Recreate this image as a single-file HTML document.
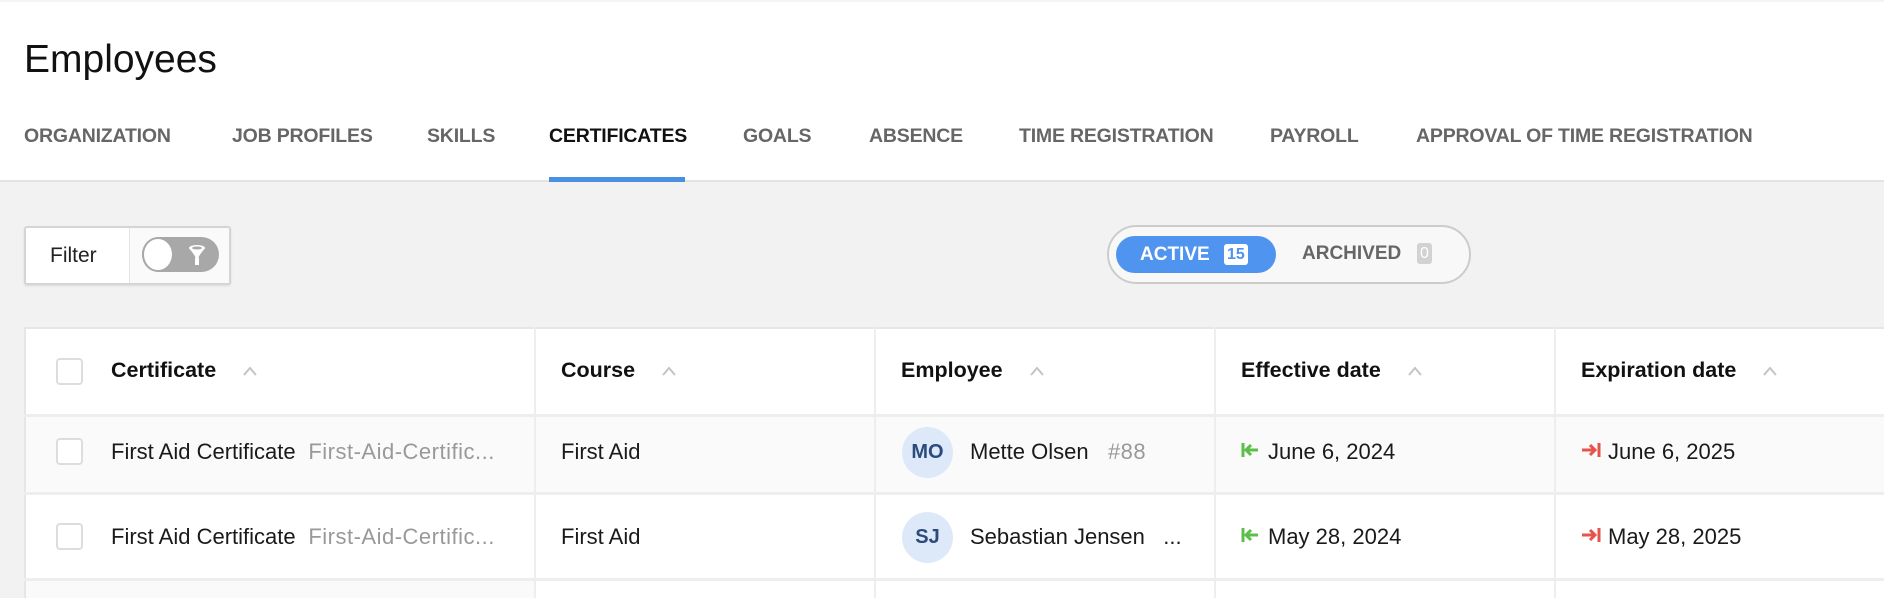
<!DOCTYPE html>
<html><head><meta charset="utf-8"><style>
*{box-sizing:border-box;margin:0;padding:0}
body{width:1884px;height:598px;overflow:hidden;background:#f2f2f2;font-family:"Liberation Sans",Arial,sans-serif;color:#1a1a1a;position:relative}
.abs{position:absolute}
.head{left:0;top:0;width:1884px;height:182px;background:#fff;border-top:2px solid #f4f4f4;border-bottom:2px solid #e3e3e3}
.title{left:24px;top:38px;font-size:39px;color:#111}
.tab{top:125px;font-size:19.5px;font-weight:bold;color:#666;letter-spacing:-0.2px}
.tab.on{color:#111}
.ul{left:549px;top:177px;width:136px;height:5px;background:#4a90e2}
.filter{left:24px;top:226px;width:207px;height:59px;background:#fff;border:2px solid #d5d5d5;border-radius:3px;box-shadow:0 1px 2px rgba(0,0,0,.1)}
.filter .lbl{position:absolute;left:24px;top:16px;font-size:21px;color:#222}
.filter .side{position:absolute;left:103px;top:0;width:100px;height:55px;background:#fafafa;border-left:1px solid #e5e5e5}
.tog{position:absolute;left:12px;top:9px;width:77px;height:35px;border-radius:18px;background:#a8a8a8}
.knob{position:absolute;left:0;top:0;width:32px;height:35px;border-radius:50%;background:#fff;border:2px solid #a8a8a8}
.pill{left:1107px;top:225px;width:364px;height:59px;border:2px solid #ccc;border-radius:30px;background:#f8f8f8}
.act{left:1116px;top:236px;width:160px;height:37px;background:#4f94ef;border-radius:19px;color:#fff;font-weight:bold;font-size:19px}
.badge{display:inline-block;font-size:16px;padding:1px 3px;border-radius:3px;line-height:19px}
.table{left:24px;top:327px;width:1860px;height:271px;background:#fff;border-top:2px solid #e6e6e6;border-left:2px solid #e6e6e6}
.vl{top:327px;width:2px;height:271px;background:#eee}
.hl{left:24px;width:1860px;height:3px;background:#eee}
.cb{width:27px;height:27px;border:2px solid #ddd;border-radius:4px;background:#fff}
.th{font-size:21.5px;font-weight:bold;color:#111;white-space:nowrap}
.car{display:inline-block;margin-left:26px;vertical-align:middle}
.td{font-size:22px;color:#1a1a1a;white-space:nowrap}
.g{color:#999;letter-spacing:0.5px}
.av{width:51px;height:51px;border-radius:50%;background:#dde9f9;color:#2b4a7d;font-weight:bold;font-size:20px;text-align:center;line-height:51px}
</style></head><body>
<div class="abs head"></div>
<div class="abs title">Employees</div>
<div class="abs tab" style="left:24px">ORGANIZATION</div>
<div class="abs tab" style="left:232px">JOB PROFILES</div>
<div class="abs tab" style="left:427px">SKILLS</div>
<div class="abs tab on" style="left:549px">CERTIFICATES</div>
<div class="abs tab" style="left:743px">GOALS</div>
<div class="abs tab" style="left:869px">ABSENCE</div>
<div class="abs tab" style="left:1019px">TIME REGISTRATION</div>
<div class="abs tab" style="left:1270px">PAYROLL</div>
<div class="abs tab" style="left:1416px">APPROVAL OF TIME REGISTRATION</div>
<div class="abs ul"></div>

<div class="abs filter"><div class="lbl">Filter</div><div class="side"><div class="tog"><div class="knob"></div>
<svg style="position:absolute;left:44px;top:6px" width="22" height="24" viewBox="0 0 22 24"><ellipse cx="11" cy="5" rx="8" ry="3" fill="#fff"/><path d="M3 5q8 10 6 10v7h4v-7q-2 0 6-10" fill="#fff"/><ellipse cx="11" cy="5" rx="5" ry="1.5" fill="#a8a8a8"/></svg></div></div></div>

<div class="abs pill"></div>
<div class="abs act"><span style="position:absolute;left:24px;top:8px">ACTIVE</span><span class="badge" style="position:absolute;left:108px;top:8px;background:#fff;color:#4f94ef">15</span></div>
<div class="abs" style="left:1302px;top:243px;font-size:19px;font-weight:bold;color:#666">ARCHIVED</div>
<div class="abs badge" style="left:1417px;top:243px;background:#d2d2d2;color:#fff">0</div>

<div class="abs table"></div>
<div class="abs" style="left:26px;top:416px;width:1858px;height:78px;background:#fafafa"></div>
<div class="abs" style="left:26px;top:580px;width:509px;height:18px;background:#fafafa"></div>
<div class="abs vl" style="left:534px"></div>
<div class="abs vl" style="left:874px"></div>
<div class="abs vl" style="left:1214px"></div>
<div class="abs vl" style="left:1554px"></div>
<div class="abs hl" style="top:414px"></div>
<div class="abs hl" style="top:492px"></div>
<div class="abs hl" style="top:578px"></div>

<div class="abs cb" style="left:56px;top:358px"></div>
<div class="abs th" style="left:111px;top:358px">Certificate<svg class="car" width="16" height="10" viewBox="0 0 16 10"><path d="M2 9l6-7 6 7" stroke="#c4c4c4" stroke-width="2" fill="none"/></svg></div>
<div class="abs th" style="left:561px;top:358px">Course<svg class="car" width="16" height="10" viewBox="0 0 16 10"><path d="M2 9l6-7 6 7" stroke="#c4c4c4" stroke-width="2" fill="none"/></svg></div>
<div class="abs th" style="left:901px;top:358px">Employee<svg class="car" width="16" height="10" viewBox="0 0 16 10"><path d="M2 9l6-7 6 7" stroke="#c4c4c4" stroke-width="2" fill="none"/></svg></div>
<div class="abs th" style="left:1241px;top:358px">Effective date<svg class="car" width="16" height="10" viewBox="0 0 16 10"><path d="M2 9l6-7 6 7" stroke="#c4c4c4" stroke-width="2" fill="none"/></svg></div>
<div class="abs th" style="left:1581px;top:358px">Expiration date<svg class="car" width="16" height="10" viewBox="0 0 16 10"><path d="M2 9l6-7 6 7" stroke="#c4c4c4" stroke-width="2" fill="none"/></svg></div>

<div class="abs cb" style="left:56px;top:438px"></div>
<div class="abs td" style="left:111px;top:439px">First Aid Certificate <span class="g">&nbsp;First-Aid-Certific...</span></div>
<div class="abs td" style="left:561px;top:439px">First Aid</div>
<div class="abs av" style="left:902px;top:427px">MO</div>
<div class="abs td" style="left:970px;top:439px">Mette Olsen <span class="g">&nbsp;&nbsp;#88</span></div>
<svg class="abs" style="left:1241px;top:441px" width="20" height="18" viewBox="0 0 20 18"><path d="M2 2v14M17 9H5M10 4L5 9l5 5" stroke="#5cbf4a" stroke-width="3" fill="none"/></svg>
<div class="abs td" style="left:1268px;top:439px">June 6, 2024</div>
<svg class="abs" style="left:1581px;top:441px" width="20" height="18" viewBox="0 0 20 18"><path d="M18 2v14M1 9h13M9 4l5 5-5 5" stroke="#e5534b" stroke-width="3" fill="none"/></svg>
<div class="abs td" style="left:1608px;top:439px">June 6, 2025</div>

<div class="abs cb" style="left:56px;top:523px"></div>
<div class="abs td" style="left:111px;top:524px">First Aid Certificate <span class="g">&nbsp;First-Aid-Certific...</span></div>
<div class="abs td" style="left:561px;top:524px">First Aid</div>
<div class="abs av" style="left:902px;top:512px">SJ</div>
<div class="abs td" style="left:970px;top:524px">Sebastian Jensen &nbsp;&nbsp;...</div>
<svg class="abs" style="left:1241px;top:526px" width="20" height="18" viewBox="0 0 20 18"><path d="M2 2v14M17 9H5M10 4L5 9l5 5" stroke="#5cbf4a" stroke-width="3" fill="none"/></svg>
<div class="abs td" style="left:1268px;top:524px">May 28, 2024</div>
<svg class="abs" style="left:1581px;top:526px" width="20" height="18" viewBox="0 0 20 18"><path d="M18 2v14M1 9h13M9 4l5 5-5 5" stroke="#e5534b" stroke-width="3" fill="none"/></svg>
<div class="abs td" style="left:1608px;top:524px">May 28, 2025</div>
</body></html>
